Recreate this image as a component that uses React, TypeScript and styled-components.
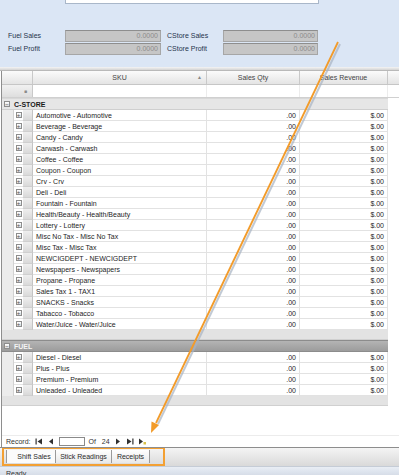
import styled, { createGlobalStyle } from "styled-components";

const GlobalStyle = createGlobalStyle`
  html, body {
    margin: 0;
    padding: 0;
    background: #ffffff;
  }
  body {
    font-family: "Liberation Sans", Arial, sans-serif;
    font-size: 7px;
    color: #222;
  }
`;

const Page = styled.div`
  position: relative;
  width: 399px;
  height: 475px;
  overflow: hidden;
  display: flex;
  flex-direction: column;
  background: #fff;
`;

// ---- top summary panel ----
const TopPanel = styled.div`
  height: 67px;
  flex-shrink: 0;
  background: #dbe6f5;
  display: flex;
  flex-direction: column;
  box-sizing: border-box;
`;

const Memo = styled.div`
  margin-left: 65px;
  width: 252px;
  height: 3px;
  background: #fff;
  border: 1px solid #a9b7c9;
  border-top: none;
`;

const SummaryGrid = styled.div`
  margin-top: 25px;
  display: grid;
  grid-template-columns: 57px 96px 62px 95px;
  grid-auto-rows: 13px;
  padding-left: 8px;
  align-items: center;
`;

const Label = styled.span`
  color: #26344c;
  font-size: 7px;
  padding-left: ${p => (p.$indent ? "6px" : "0")};
`;

const ReadOnlyBox = styled.div`
  height: 12px;
  box-sizing: border-box;
  background: #c6c6c6;
  border: 1px solid #a6a6a6;
  border-top-color: #8e8e8e;
  color: #8c8c8c;
  text-align: right;
  padding-right: 2px;
  line-height: 10px;
  font-size: 7px;
`;

const Splitter = styled.div`
  height: 3px;
  flex-shrink: 0;
  background: linear-gradient(#f4f4f4, #d4d4d4);
  border-bottom: 1px solid #b9b9b9;
`;

// ---- grid ----
const Grid = styled.div`
  flex: 1;
  display: flex;
  flex-direction: column;
  margin-left: 1px;
  border-left: 1px solid #8e8e8e;
  background: #fff;
`;

const HeaderRow = styled.div`
  display: flex;
  height: 13px;
  flex-shrink: 0;
  background: linear-gradient(#fbfbfb, #e4e4e4);
  border-bottom: 1px solid #c6c6c6;
`;

const HeadCell = styled.div`
  width: ${p => p.$w}px;
  flex-shrink: 0;
  box-sizing: border-box;
  border-right: 1px solid #c9c9c9;
  display: flex;
  align-items: center;
  justify-content: center;
  position: relative;
  color: #444;
  font-size: 7px;
`;

const SortArrow = styled.span`
  position: absolute;
  right: 4px;
  top: 3px;
  font-size: 5px;
  color: #888;
`;

const FilterRow = styled.div`
  display: flex;
  height: 12px;
  flex-shrink: 0;
  border-bottom: 1px solid #d0d0d0;
`;

const FilterIndicator = styled.div`
  width: 31px;
  box-sizing: border-box;
  background: linear-gradient(#f1f1f1, #dedede);
  border-right: 1px solid #c9c9c9;
  display: flex;
  align-items: center;
  justify-content: flex-end;
  padding-right: 5px;
  color: #8a8a8a;
  font-size: 5px;
`;

const FilterCell = styled.div`
  width: ${p => p.$w}px;
  flex-shrink: 0;
  box-sizing: border-box;
  border-right: 1px solid #ececec;
`;

const GroupHeader = styled.div`
  width: 386px;
  height: 12px;
  flex-shrink: 0;
  box-sizing: border-box;
  display: flex;
  align-items: center;
  gap: 4px;
  padding-left: 2px;
  background: ${p => (p.$dark ? "linear-gradient(#b4b4b4, #9c9c9c)" : "#e6e6e6")};
  color: ${p => (p.$dark ? "#f4f4f4" : "#1a1a1a")};
  font-weight: bold;
  font-size: 7px;
  border-top: 1px solid ${p => (p.$dark ? "#8c8c8c" : "#d8d8d8")};
  border-bottom: 1px solid ${p => (p.$dark ? "#8c8c8c" : "#cfcfcf")};
`;

const ToggleBox = styled.span`
  width: 6px;
  height: 6px;
  box-sizing: border-box;
  border: 1px solid #8d8d8d;
  background: linear-gradient(#ffffff, #dcdcdc);
  display: flex;
  align-items: center;
  justify-content: center;
  color: #555;
  font-size: 6px;
  line-height: 1;
  font-weight: normal;
`;

const Row = styled.div`
  display: flex;
  height: 11px;
  flex-shrink: 0;
  width: 386px;
`;

const Gutter = styled.div`
  width: 12px;
  flex-shrink: 0;
  background: #ececec;
  border-right: 1px solid #d2d2d2;
  box-sizing: border-box;
`;

const ExpandCell = styled.div`
  width: 9px;
  flex-shrink: 0;
  display: flex;
  align-items: center;
  justify-content: center;
  border-bottom: 1px solid #e4e4e4;
  box-sizing: border-box;
`;

const Selector = styled.div`
  width: 10px;
  flex-shrink: 0;
  background: linear-gradient(#efefef, #d9d9d9);
  border-right: 1px solid #c4c4c4;
  border-bottom: 1px solid #cfcfcf;
  box-sizing: border-box;
`;

const Cell = styled.div`
  width: ${p => p.$w}px;
  flex-shrink: 0;
  box-sizing: border-box;
  border-right: 1px solid #e2e2e2;
  border-bottom: 1px solid #e2e2e2;
  padding: 0 3px;
  display: flex;
  align-items: center;
  justify-content: ${p => (p.$right ? "flex-end" : "flex-start")};
  color: #1d1d1d;
  font-size: 7px;
  white-space: nowrap;
`;

const GroupFooter = styled.div`
  width: 386px;
  height: 10px;
  flex-shrink: 0;
  background: #e3e3e3;
  border-bottom: 1px solid #d0d0d0;
  box-sizing: border-box;
`;

const Filler = styled.div`
  flex: 1;
`;

// ---- navigator ----
const Navigator = styled.div`
  height: 11px;
  flex-shrink: 0;
  display: flex;
  align-items: center;
  gap: 4px;
  padding-left: 4px;
  background: #fff;
  border-top: 1px solid #ececec;
  color: #333;
  font-size: 7px;
`;

const NavInput = styled.div`
  width: 26px;
  height: 9px;
  box-sizing: border-box;
  border: 1px solid #8a8a8a;
  background: #fff;
`;

const NavIcon = styled.svg`
  width: 8px;
  height: 7px;
  fill: #303030;
`;

// ---- tabs ----
const TabStrip = styled.div`
  height: 19px;
  flex-shrink: 0;
  display: flex;
  align-items: stretch;
  background: linear-gradient(#f4f4f4, #d9d9d9);
  border-top: 1px solid #8d8d8d;
  box-sizing: border-box;
`;

const TabGroup = styled.div`
  display: flex;
  align-items: stretch;
  margin-left: 2px;
  width: 163px;
  box-sizing: border-box;
  border: 2px solid #f3a033;
  border-top-width: 1px;
  padding: 1px 0 1px 2px;
`;

const Tab = styled.div`
  width: ${p => p.$w}px;
  box-sizing: border-box;
  display: flex;
  align-items: center;
  justify-content: center;
  background: ${p => (p.$active ? "#fbfbfb" : "linear-gradient(#ffffff, #e9e9e9)")};
  border-right: 1px solid #9a9a9a;
  border-left: ${p => (p.$active ? "1px solid #9a9a9a" : "none")};
  padding-left: ${p => (p.$active ? "6px" : "0")};
  color: #2a2a2a;
  font-size: 7px;
  white-space: nowrap;
`;

const StatusBar = styled.div`
  height: 9px;
  flex-shrink: 0;
  background: linear-gradient(#e9eef5, #d6dde8);
  border-top: 1px solid #c5ccd6;
  padding: 3px 0 0 6px;
  box-sizing: border-box;
  color: #333;
  font-size: 7px;
  line-height: 7px;
`;

const Overlay = styled.svg`
  position: absolute;
  left: 0;
  top: 0;
  pointer-events: none;
`;

const cstore = [
  "Automotive - Automotive",
  "Beverage - Beverage",
  "Candy - Candy",
  "Carwash - Carwash",
  "Coffee - Coffee",
  "Coupon - Coupon",
  "Crv - Crv",
  "Deli - Deli",
  "Fountain - Fountain",
  "Health/Beauty - Health/Beauty",
  "Lottery - Lottery",
  "Misc No Tax - Misc No Tax",
  "Misc Tax - Misc Tax",
  "NEWCIGDEPT - NEWCIGDEPT",
  "Newspapers - Newspapers",
  "Propane - Propane",
  "Sales Tax 1 - TAX1",
  "SNACKS - Snacks",
  "Tabacco - Tobacco",
  "Water/Juice - Water/Juice",
];

const fuel = ["Diesel - Diesel", "Plus - Plus", "Premium - Premium", "Unleaded - Unleaded"];

function DataRow({ sku }: { sku: string }) {
  return (
    <Row>
      <Gutter />
      <ExpandCell>
        <ToggleBox>+</ToggleBox>
      </ExpandCell>
      <Selector />
      <Cell $w={174}>{sku}</Cell>
      <Cell $w={93} $right>.00</Cell>
      <Cell $w={88} $right>$.00</Cell>
    </Row>
  );
}

function App() {
  return (
    <Page>
      <GlobalStyle />
      <TopPanel>
        <Memo />
        <SummaryGrid>
          <Label>Fuel Sales</Label>
          <ReadOnlyBox>0.0000</ReadOnlyBox>
          <Label $indent>CStore Sales</Label>
          <ReadOnlyBox>0.0000</ReadOnlyBox>
          <Label>Fuel Profit</Label>
          <ReadOnlyBox>0.0000</ReadOnlyBox>
          <Label $indent>CStore Profit</Label>
          <ReadOnlyBox>0.0000</ReadOnlyBox>
        </SummaryGrid>
      </TopPanel>
      <Splitter />

      <Grid>
        <HeaderRow>
          <HeadCell $w={31} />
          <HeadCell $w={174}>
            SKU
            <SortArrow>▲</SortArrow>
          </HeadCell>
          <HeadCell $w={93}>Sales Qty</HeadCell>
          <HeadCell $w={88}>Sales Revenue</HeadCell>
        </HeaderRow>
        <FilterRow>
          <FilterIndicator>■</FilterIndicator>
          <FilterCell $w={174} />
          <FilterCell $w={93} />
          <FilterCell $w={88} />
        </FilterRow>

        <GroupHeader>
          <ToggleBox>−</ToggleBox>
          C-STORE
        </GroupHeader>
        {cstore.map(s => (
          <DataRow key={s} sku={s} />
        ))}
        <GroupFooter />

        <GroupHeader $dark>
          <ToggleBox>−</ToggleBox>
          FUEL
        </GroupHeader>
        {fuel.map(s => (
          <DataRow key={s} sku={s} />
        ))}
        <GroupFooter />
        <Filler />

        <Navigator>
          <span>Record:</span>
          <NavIcon viewBox="0 0 8 7">
            <rect x="0.5" y="0.5" width="1.2" height="6" />
            <path d="M7 0.5 L2.5 3.5 L7 6.5 Z" />
          </NavIcon>
          <NavIcon viewBox="0 0 8 7">
            <path d="M6 0.5 L2 3.5 L6 6.5 Z" />
          </NavIcon>
          <NavInput />
          <span>Of</span>
          <span>&nbsp;24</span>
          <NavIcon viewBox="0 0 8 7">
            <path d="M2 0.5 L6 3.5 L2 6.5 Z" />
          </NavIcon>
          <NavIcon viewBox="0 0 8 7">
            <path d="M1 0.5 L5.5 3.5 L1 6.5 Z" />
            <rect x="6.3" y="0.5" width="1.2" height="6" />
          </NavIcon>
          <NavIcon viewBox="0 0 8 7">
            <path d="M1 0.5 L5 3.5 L1 6.5 Z" />
            <rect x="5.5" y="4" width="2.5" height="2.5" fill="#d9c24a" />
          </NavIcon>
        </Navigator>
      </Grid>

      <TabStrip>
        <TabGroup>
          <Tab $active $w={50}>Shift Sales</Tab>
          <Tab $w={56}>Stick Readings</Tab>
          <Tab $w={38}>Receipts</Tab>
        </TabGroup>
      </TabStrip>
      <StatusBar>Ready</StatusBar>

      <Overlay width="399" height="475" viewBox="0 0 399 475">
        <line x1="340" y1="44" x2="158" y2="424" stroke="#a8b4c4" strokeWidth="2" opacity="0.7" />
        <line x1="338" y1="42" x2="156" y2="423" stroke="#f29b2a" strokeWidth="1.8" />
        <path d="M151 433 L159 425 L151.5 421.5 Z" fill="#f29b2a" />
      </Overlay>
    </Page>
  );
}

export default App;
